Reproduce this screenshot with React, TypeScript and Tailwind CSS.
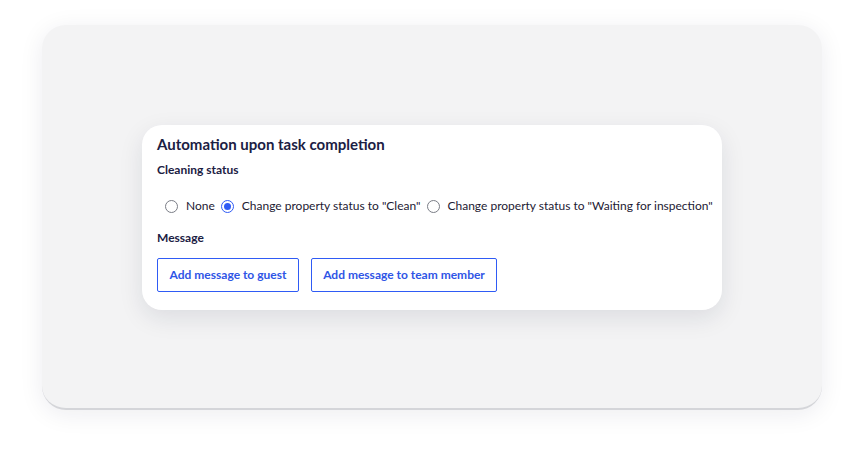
import React from "react";

function Radio({ checked, label }: { checked?: boolean; label: string }) {
  return (
    <label className="flex items-center gap-[8px] whitespace-nowrap">
      {checked ? (
        <span className="flex h-[13px] w-[13px] shrink-0 items-center justify-center rounded-full border border-[#2f5bf5] bg-white">
          <span className="h-[7px] w-[7px] rounded-full bg-[#2f5bf5]" />
        </span>
      ) : (
        <span className="h-[13px] w-[13px] shrink-0 rounded-full border border-[#7a7d86] bg-white" />
      )}
      <span className="text-[12px] text-[#1d2033]">{label}</span>
    </label>
  );
}

export default function App() {
  return (
    <div className="h-[469px] w-[864px] bg-white pl-[42px] pt-[25px]" style={{ fontFamily: "Lato, 'Noto Sans', sans-serif" }}>
      <div className="h-[385px] w-[780px] rounded-[24px] border-b-2 border-[#d4d5d9] bg-[#f3f3f4] pl-[100px] pt-[100px] shadow-[0_4px_24px_rgba(20,25,60,0.08)]">
        <div className="h-[185px] w-[580px] rounded-[20px] bg-white px-[15px] pt-[9px] shadow-[0_8px_24px_rgba(20,25,60,0.10)]">
          <h1 className="text-[15px] font-bold leading-[20px] text-[#1b2043]">Automation upon task completion</h1>
          <div className="mt-[8px] text-[12px] font-bold leading-[16px] text-[#1b2043]">Cleaning status</div>
          <div className="mt-[20px] flex h-[16px] items-center gap-[6px] pl-[8px]">
            <Radio label="None" />
            <Radio checked label={'Change property status to "Clean"'} />
            <Radio label={'Change property status to "Waiting for inspection"'} />
          </div>
          <div className="mt-[16px] text-[12px] font-bold leading-[16px] text-[#1b2043]">Message</div>
          <div className="mt-[12px] flex gap-[12px]">
            <button className="h-[34px] w-[142px] rounded-[2px] border border-[#2f5bf5] text-[12px] font-bold text-[#2f55e6]">Add message to guest</button>
            <button className="h-[34px] w-[186px] rounded-[2px] border border-[#2f5bf5] text-[12px] font-bold text-[#2f55e6]">Add message to team member</button>
          </div>
        </div>
      </div>
    </div>
  );
}
